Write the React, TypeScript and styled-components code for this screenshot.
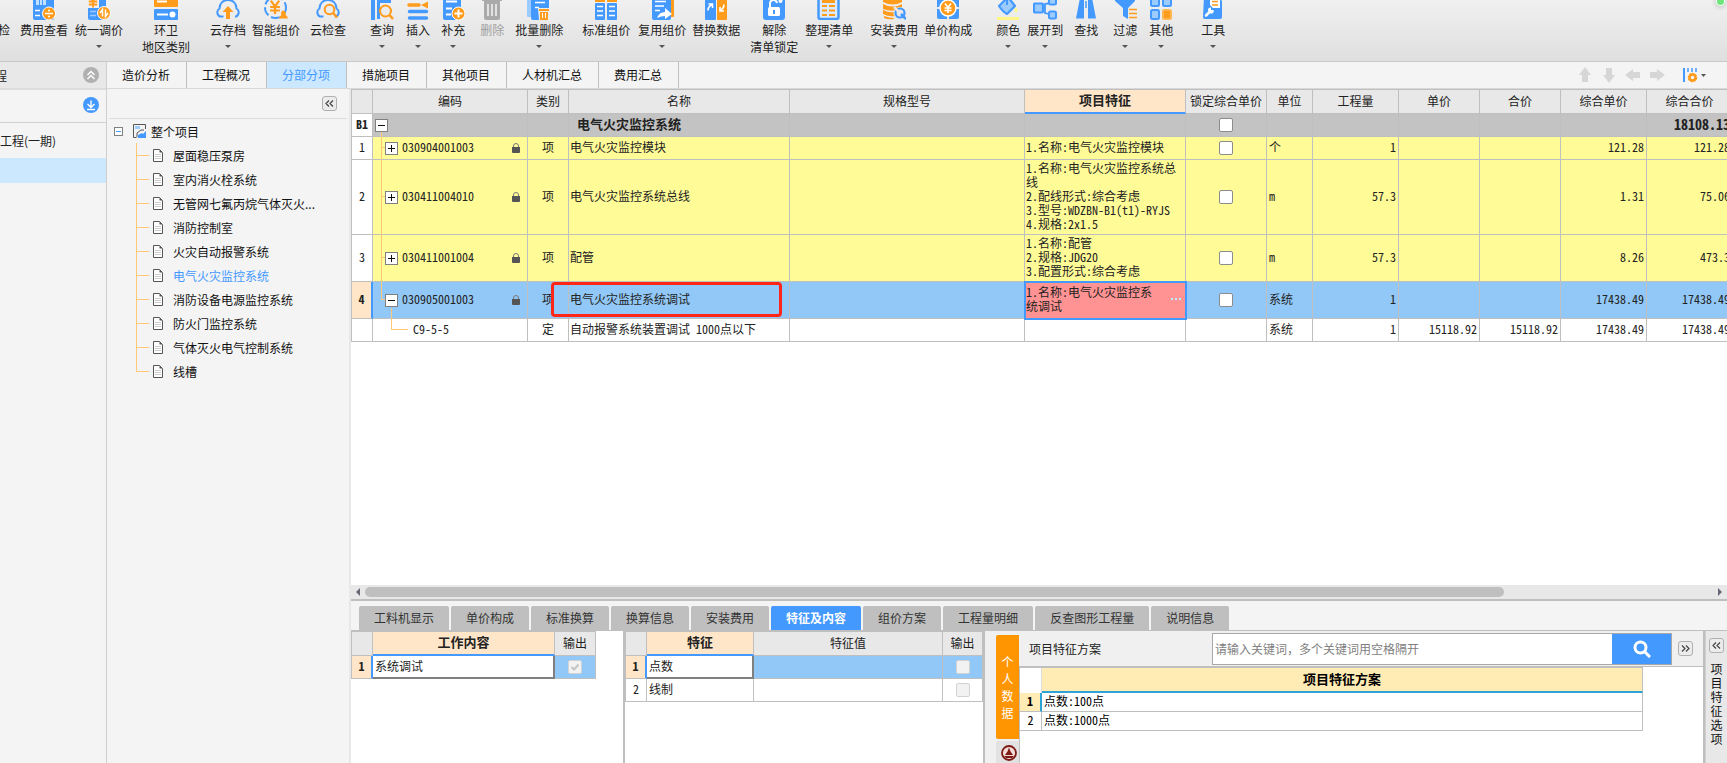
import React from "react";
import styled, { createGlobalStyle, css } from "styled-components";

const BLUE = "#4499ff";
const PALE = "#9ccbff";
const ORANGE = "#ff9c1c";
const LINE = "#bfbfbf";
const UI = `"Noto Sans CJK SC", sans-serif`;
const GRID = `"Noto Sans Mono CJK SC", "Noto Sans CJK SC", monospace`;

const Global = createGlobalStyle`
  *, *::before, *::after { box-sizing: border-box; }
  body { margin: 0; font: 12px/17px ${UI}; color: #222; background: #f4f4f4; }
  button, input { font: inherit; color: inherit; padding: 0; margin: 0; }
  button { background: none; border: 0; }
  svg { display: block; }
`;

const Page = styled.div`
  display: flex;
  flex-direction: column;
  height: 100vh;
  min-height: 640px;
  overflow: hidden;
`;

/* ---------- ribbon ---------- */

const Ribbon = styled.header`
  position: relative;
  display: flex;
  flex: none;
  height: 62px;
  overflow: hidden;
  border-bottom: 1px solid #c8c8c8;
  background: linear-gradient(#f0f0f0, #dfdfdf);
`;

const RibbonButton = styled.button<{ $gap: number }>`
  display: flex;
  flex-direction: column;
  flex: none;
  align-items: center;
  margin-left: ${(p) => p.$gap}px;
  white-space: nowrap;
  color: #222;
  &:disabled { color: #a0a0a0; }
`;

const RibbonIcon = styled.svg`
  width: 24px;
  height: 20px;
  margin-bottom: 1px;
`;

const Caret = styled.span`
  margin-top: 7px;
  border: 3px solid transparent;
  border-top-color: #555;
  border-bottom: 0;
`;

const StatusDot = styled.span`
  position: absolute;
  top: -6px;
  right: 2px;
  width: 9px;
  height: 12px;
  border: 1px solid #fff;
  border-radius: 4px;
  background: #6fe37c;
  box-shadow: 0 1px 5px #bbb;
`;

const Yen = ({ x, y, c, s = 1 }: { x: number; y: number; c: string; s?: number }) => (
  <path
    d="M-3 -4.500L0 -.5 3 -4.500M-3.500 0h7M-3.500 2.500h7M0 -.5v5.500"
    transform={`translate(${x} ${y}) scale(${s})`}
    stroke={c}
    strokeWidth="1.6"
    fill="none"
  />
);

const cloud = (
  <path
    d="M7.5 20.500H4A4.500 4.500 0 0 1 3.500 12.500C3.500 7.500 7 4 12 4s8.500 3.500 8.500 8.500A4.500 4.500 0 0 1 20 20.500h-1"
    fill="none"
    stroke={BLUE}
    strokeWidth="2"
  />
);

const icons: Record<string, React.ReactNode> = {
  none: null,
  feeView: (
    <>
      <rect x="1" y="0" width="21" height="24" rx="2" fill={BLUE} />
      <path d="M4 4h3v5H4zM8 2h2v7H8zM11 3h3v6h-3z" fill="#c4e0ff" />
      <path d="M3 14.500h5M3 19.500h5" stroke="#fff" strokeWidth="1.500" />
      <circle cx="17" cy="17.500" r="6.500" fill={ORANGE} stroke="#fff" />
      <path d="M13 17.500h8" stroke="#fff" strokeWidth="1.500" />
      <circle cx="17" cy="14.500" r="1" fill="#fff" />
      <circle cx="17" cy="20.500" r="1" fill="#fff" />
    </>
  ),
  adjust: (
    <>
      <path d="M1 12h11V0h5a2 2 0 0 1 2 2v22H3a2 2 0 0 1 -2 -2z" fill={BLUE} />
      <Yen x={6} y={5.5} c={ORANGE} s={1.2} />
      <path d="M3 15.500h6M3 19.500h6" stroke={PALE} strokeWidth="1.500" />
      <circle cx="17" cy="17" r="6.500" fill={ORANGE} stroke="#fff" />
      <path d="M15.500 20.500v-7l-2.500 3.500M18.500 13.500v7l2.500 -3.500" fill="none" stroke="#fff" strokeWidth="1.500" />
    </>
  ),
  region: (
    <>
      <rect x="0" y="0" width="24" height="11" rx="1" fill={ORANGE} />
      <path d="M3 5.500h10" stroke="#fff" strokeWidth="2" />
      <rect x="0" y="13" width="24" height="11" rx="1" fill={BLUE} />
      <path d="M3 18.500h11" stroke="#fff" strokeWidth="2" />
      <circle cx="18.500" cy="18.500" r="3" fill="#fff" />
    </>
  ),
  cloudSave: (
    <>
      {cloud}
      <path d="M12 10l5.500 6H14v7h-4v-7H6.500z" fill={ORANGE} />
    </>
  ),
  smart: (
    <>
      <circle cx="11.500" cy="11.500" r="10.500" fill="none" stroke={BLUE} strokeWidth="2" strokeDasharray="9 3" />
      <Yen x={11} y={11} c={ORANGE} s={1.4} />
      <path d="M19 14.500a3 3 0 0 1 2.500 4.500q2 .5 2.500 3.500H15q.5 -3 2.500 -3.500a3 3 0 0 1 1.500 -4.500z" fill={ORANGE} />
    </>
  ),
  cloudCheck: (
    <>
      {cloud}
      <circle cx="13.500" cy="13.500" r="4.800" fill="#ececec" stroke={ORANGE} strokeWidth="2" />
      <path d="M17 17l4 4.500" stroke={ORANGE} strokeWidth="2.500" />
    </>
  ),
  query: (
    <>
      <rect x="1" y="0" width="4" height="24" fill={BLUE} />
      <path d="M7 0h14v7H10v16H7z" fill={BLUE} />
      <circle cx="15.500" cy="15" r="5.500" fill="#ececec" stroke={ORANGE} strokeWidth="2" />
      <path d="M19.500 19l3.500 4" stroke={ORANGE} strokeWidth="2.500" />
    </>
  ),
  insert: (
    <>
      <path d="M3 9h10" stroke={ORANGE} strokeWidth="3.500" strokeLinecap="round" />
      <path d="M22 5.500v7l-7 -3.500z" fill={ORANGE} />
      <path d="M4 2h16M3.500 15.500h17M3.500 22h17" stroke={BLUE} strokeWidth="3.500" strokeLinecap="round" />
    </>
  ),
  supply: (
    <>
      <rect x="2" y="-2" width="18" height="26" rx="2" fill={BLUE} />
      <path d="M5 5.500h11M5 12.500h6M5 18.500h5" stroke="#fff" strokeWidth="2" />
      <circle cx="17.500" cy="17.500" r="6.500" fill={ORANGE} stroke="#fff" />
      <path d="M13.500 17.500h8M17.500 13.500v8" stroke="#fff" strokeWidth="2" />
    </>
  ),
  trash: (
    <>
      <path d="M2 2h20v3H2z" fill="#aaa" />
      <path d="M4 5h16v17a2 2 0 0 1 -2 2H6a2 2 0 0 1 -2 -2z" fill="#aaa" />
      <path d="M8 8v12M12 8v12M16 8v12" stroke="#e8e8e8" strokeWidth="1.800" />
    </>
  ),
  batch: (
    <>
      <rect x="0" y="0" width="14" height="21" rx="1" fill={PALE} />
      <rect x="4" y="0" width="18" height="24" rx="2" fill={BLUE} />
      <path d="M8 6.500h10M8 11.500h4" stroke="#fff" strokeWidth="1.500" />
      <path d="M11 12h12v12H12z" fill="#eee" />
      <path d="M12 13h10v2H12zM13 16h8v8h-8z" fill={ORANGE} />
      <path d="M15.500 17v5M18.500 17v5" stroke="#fff" />
    </>
  ),
  standard: (
    <>
      <rect x="1" y="0" width="10" height="6" fill={ORANGE} />
      <rect x="13" y="0" width="10" height="6" fill={ORANGE} />
      <rect x="1" y="7" width="10" height="17" rx="1" fill={BLUE} />
      <rect x="13" y="7" width="10" height="17" rx="1" fill={BLUE} />
      <path d="M3 10.500h6M3 15h6M3 19.500h6M15 10.500h6M15 15h6M15 19.500h6" stroke="#fff" strokeWidth="1.500" />
    </>
  ),
  reuse: (
    <>
      <rect x="14" y="0" width="10" height="21" rx="1" fill={ORANGE} />
      <rect x="2" y="-1" width="19" height="25" rx="2" fill={BLUE} />
      <path d="M5 5.500h11M5 10h9M5 14.500h5" stroke="#fff" strokeWidth="1.500" />
      <path d="M7 22q2 -6 8 -6v-4l7 6 -7 5v-3q-4 0 -8 2z" fill="#fff" />
    </>
  ),
  swap: (
    <>
      <rect x="1" y="0" width="11" height="24" rx="1" fill={BLUE} />
      <rect x="13" y="0" width="10" height="24" rx="1" fill={ORANGE} />
      <path d="M4 14.500q0 -4 4 -6M4.500 8H8.500v4M20 8.500q0 4 -4 6M20 15h-4v-4" fill="none" stroke="#fff" strokeWidth="1.600" />
    </>
  ),
  unlock: (
    <>
      <rect x="1" y="-2" width="22" height="26" rx="3" fill={BLUE} />
      <rect x="6" y="11" width="12" height="9" rx="1.500" fill="#fff" />
      <path d="M8 11V8a3.500 3.500 0 0 1 7 -1" fill="none" stroke="#fff" strokeWidth="2" />
      <path d="M12 14v4" stroke={BLUE} strokeWidth="2" />
      <circle cx="18.500" cy="5" r="2" fill="#fff" />
    </>
  ),
  arrange: (
    <>
      <rect x="1.500" y="-2" width="20" height="25" rx="2" fill="#dceaff" stroke={BLUE} strokeWidth="2.500" />
      <path d="M5 5.500h13" stroke={ORANGE} strokeWidth="3" />
      <path d="M5 10h5M12 10h6M5 14.500h5M12 14.500h6M5 19h5M12 19h6" stroke={ORANGE} strokeWidth="2" />
    </>
  ),
  install: (
    <>
      <path d="M1 1q10 5 19 0v5q-9 5 -19 0zM1 8q10 5 19 0v4q-9 5 -19 1zM1 14q6 3 12 2v4q-6 1 -12 -2zM2 20q5 2 10 2v1q-6 1 -10 -1z" fill={ORANGE} />
      <circle cx="18" cy="17.500" r="6.500" fill="#e8e8e8" />
      <circle cx="18" cy="17" r="4.500" fill="none" stroke={BLUE} strokeWidth="2.200" />
      <path d="M18 17l-6 -6" stroke="#e8e8e8" strokeWidth="2.500" />
      <path d="M19 18l5 5" stroke={BLUE} strokeWidth="2.500" />
    </>
  ),
  compose: (
    <>
      <rect x="1" y="1" width="22" height="22" rx="2" fill={BLUE} />
      <path d="M12 0v24M0 12h24" stroke="#e8e8e8" strokeWidth="2" />
      <circle cx="12" cy="12" r="8" fill={ORANGE} stroke="#fff" strokeWidth="1.500" />
      <Yen x={12} y={12} c="#fff" />
    </>
  ),
  color: (
    <>
      <path d="M3 10l9 -9 7 9 -8 8q-4 -2 -8 -8z" fill={PALE} stroke={BLUE} strokeWidth="2.200" strokeLinejoin="round" />
      <path d="M11 0v9" stroke={BLUE} strokeWidth="2" />
      <path d="M20 11q3 4 0 5.500q-3 -1.500 0 -5.500z" fill="#fff68a" />
      <path d="M1 22.500h22" stroke="#fff68a" strokeWidth="3" />
    </>
  ),
  expand: (
    <>
      <path d="M8 12h4M20 6.500L12 8v9l8 2" fill="none" stroke={BLUE} strokeWidth="1.800" />
      <rect x="1" y="7.500" width="9" height="9" rx="1" fill={PALE} stroke={BLUE} strokeWidth="2.200" />
      <rect x="16" y="1.500" width="7" height="7" rx="1.500" fill={PALE} stroke={BLUE} strokeWidth="2" />
      <rect x="16" y="15.500" width="7" height="7" rx="1.500" fill={PALE} stroke={BLUE} strokeWidth="2" />
    </>
  ),
  find: (
    <>
      <path d="M6 2h4v20.500H2L5 7zM18 2h-4v20.500h8L19 7z" fill={BLUE} />
      <path d="M12 5v7" stroke={BLUE} strokeWidth="1.500" />
    </>
  ),
  filter: (
    <>
      <path d="M2 0h20v5l-7 7v11l-5 -3v-8L2 5z" fill={BLUE} />
      <path d="M16 13.500h8M16 17.500h8M16 21.500h8" stroke={ORANGE} strokeWidth="1.600" />
    </>
  ),
  other: (
    <>
      <rect x="2" y="1" width="8" height="9" rx="1.500" fill={PALE} stroke={BLUE} strokeWidth="2" />
      <rect x="14" y="1" width="8" height="9" rx="1.500" fill={PALE} stroke={BLUE} strokeWidth="2" />
      <rect x="2" y="14" width="8" height="9" rx="1.500" fill={PALE} stroke={BLUE} strokeWidth="2" />
      <rect x="14" y="14" width="8" height="9" rx="1.500" fill={ORANGE} stroke="#ffb650" strokeWidth="2" />
    </>
  ),
  tool: (
    <>
      <path d="M3 0h14l4 5v16a2 2 0 0 1 -2 2H4a2 2 0 0 1 -2 -2z" fill={BLUE} />
      <path d="M9 0h10v12H12L9 9z" fill="#fff" />
      <path d="M11 5.500h6M11 9h6" stroke={ORANGE} strokeWidth="1.500" />
      <path d="M5 19.500l4 -4" stroke="#fff" strokeWidth="2.500" strokeLinecap="round" />
      <path d="M7 14.500a2.500 2.500 0 0 1 3 -3v2.500h2.500a2.500 2.500 0 0 1 -3 3.500z" fill="#fff" />
    </>
  ),
};

type Tool = { label: string; second?: string; icon: string; gap: number; caret?: boolean; off?: boolean };

const tools: Tool[] = [
  { label: "检", icon: "none", gap: -8 },
  { label: "费用查看", icon: "feeView", gap: 4 },
  { label: "统一调价", icon: "adjust", gap: 7, caret: true },
  { label: "环卫", second: "地区类别", icon: "region", gap: 19 },
  { label: "云存档", icon: "cloudSave", gap: 20, caret: true },
  { label: "智能组价", icon: "smart", gap: 6 },
  { label: "云检查", icon: "cloudCheck", gap: 10 },
  { label: "查询", icon: "query", gap: 24, caret: true },
  { label: "插入", icon: "insert", gap: 12, caret: true },
  { label: "补充", icon: "supply", gap: 11, caret: true },
  { label: "删除", icon: "trash", gap: 15, off: true },
  { label: "批量删除", icon: "batch", gap: 11, caret: true },
  { label: "标准组价", icon: "standard", gap: 19 },
  { label: "复用组价", icon: "reuse", gap: 8, caret: true },
  { label: "替换数据", icon: "swap", gap: 6 },
  { label: "解除", second: "清单锁定", icon: "unlock", gap: 10 },
  { label: "整理清单", icon: "arrange", gap: 7, caret: true },
  { label: "安装费用", icon: "install", gap: 17, caret: true },
  { label: "单价构成", icon: "compose", gap: 6 },
  { label: "颜色", icon: "color", gap: 24, caret: true },
  { label: "展开到", icon: "expand", gap: 7, caret: true },
  { label: "查找", icon: "find", gap: 11 },
  { label: "过滤", icon: "filter", gap: 15, caret: true },
  { label: "其他", icon: "other", gap: 12, caret: true },
  { label: "工具", icon: "tool", gap: 28, caret: true },
];

/* ---------- frame ---------- */

const Body = styled.div`
  display: flex;
  flex: 1;
  min-height: 0;
`;

const Projects = styled.aside`
  flex: none;
  width: 107px;
  overflow: hidden;
  border-right: 1px solid #d0d0d0;
  white-space: nowrap;
`;

const ProjectBar = styled.div<{ $head?: boolean }>`
  display: flex;
  align-items: center;
  justify-content: space-between;
  padding-right: 7px;
  ${(p) =>
    p.$head
      ? css`height: 28px; background: #e8e8e8; border-bottom: 2px solid #dcdcdc; & > span { margin-left: -5px; }`
      : css`height: 33px; padding-bottom: 2px; justify-content: flex-end; border-bottom: 1px solid #d0d0d0;`}
`;

const ProjectItem = styled.div<{ $on?: boolean }>`
  height: ${(p) => (p.$on ? 25 : 35)}px;
  line-height: 35px;
  background: ${(p) => (p.$on ? "#cce8ff" : "none")};
`;

const RoundButton = styled.button<{ $c: string }>`
  width: 16px;
  height: 16px;
  border-radius: 50%;
  background: ${(p) => p.$c};
`;

const Work = styled.div`
  display: flex;
  flex-direction: column;
  flex: 1;
  min-width: 0;
`;

const TabBar = styled.nav`
  display: flex;
  flex: none;
  height: 27px;
  border-bottom: 1px solid #d8d8d8;
`;

const Tab = styled.button<{ $on?: boolean }>`
  padding: 0 16px 1px 15px;
  border-right: 1px solid ${LINE};
  color: ${(p) => (p.$on ? BLUE : "#111")};
  background: ${(p) => (p.$on ? "#cce8ff" : "none")};
`;

const Movers = styled.div`
  display: flex;
  align-items: center;
  gap: 8px;
  margin-left: auto;
  padding-right: 18px;
`;

const Split = styled.div`
  display: flex;
  flex: 1;
  min-height: 0;
`;

/* ---------- project tree ---------- */

const TreePanel = styled.aside`
  flex: none;
  width: 244px;
  border-right: 2px solid #e8e8e8;
`;

const TreeHead = styled.div`
  display: flex;
  align-items: center;
  justify-content: flex-end;
  height: 30px;
  margin: 0 2px;
  padding-right: 10px;
  border-bottom: 1px solid #dcdcdc;
`;

const SmallButton = styled.button`
  display: flex;
  flex: none;
  align-items: center;
  justify-content: center;
  width: 15px;
  height: 15px;
  border: 1px solid #b0b0b0;
  border-radius: 3px;
  background: #ececec;
`;

const TreeRoot = styled.div`
  display: flex;
  align-items: center;
  height: 24px;
  padding-left: 7px;
  color: #111;
  & > svg { margin: 0 4px 0 10px; }
`;

const Toggle = styled.button<{ $size: number }>`
  display: flex;
  flex: none;
  align-items: center;
  justify-content: center;
  width: ${(p) => p.$size}px;
  height: ${(p) => p.$size}px;
  border: 1px solid #808080;
  background: #fff;
`;

const TreeList = styled.ul`
  margin: 0;
  padding: 0;
  list-style: none;
`;

const TreeItem = styled.li<{ $on?: boolean }>`
  position: relative;
  display: flex;
  align-items: center;
  gap: 10px;
  height: 24px;
  padding-left: 46px;
  color: ${(p) => (p.$on ? BLUE : "#111")};
  &::before {
    content: "";
    position: absolute;
    left: 29px;
    top: 0;
    width: 1px;
    height: 24px;
    background: #ffc876;
  }
  &:last-child::before { height: 12px; }
  &::after {
    content: "";
    position: absolute;
    left: 29px;
    top: 12px;
    width: 13px;
    height: 1px;
    background: #ffc876;
  }
`;

const DocIcon = () => (
  <svg width="10" height="13" viewBox="0 0 10 13">
    <path d="M.5 .5h6l3 3v9h-9z" fill="#fff" stroke="#555" />
    <path d="M6.500 .5v3h3z" fill="#555" />
    <path d="M2 5.500h6M2 7.500h6M2 9.500h6" stroke="#ccc" />
  </svg>
);

const treeItems = [
  "屋面稳压泵房",
  "室内消火栓系统",
  "无管网七氟丙烷气体灭火...",
  "消防控制室",
  "火灾自动报警系统",
  "电气火灾监控系统",
  "消防设备电源监控系统",
  "防火门监控系统",
  "气体灭火电气控制系统",
  "线槽",
];

/* ---------- main grid ---------- */

const Main = styled.main`
  display: flex;
  flex-direction: column;
  flex: 1;
  min-width: 0;
  background: #fff;
`;

const GridScroll = styled.div`
  flex: 1;
  min-height: 0;
  overflow: hidden;
`;

const Table = styled.table`
  table-layout: fixed;
  border-collapse: separate;
  border-spacing: 0;
  border-top: 1px solid ${LINE};
  border-left: 1px solid ${LINE};
  font: 12px/14px ${GRID};
  td, th { padding: 0 2px 2px; border-right: 1px solid ${LINE}; border-bottom: 1px solid ${LINE}; }
`;

const MainTable = styled(Table)`width: 1382px;`;
const FullTable = styled(Table)`width: 100%;`;

const Th = styled.th<{ $on?: boolean }>`
  height: ${(p) => (p.$on ? 23 : 24)}px;
  overflow: hidden;
  white-space: nowrap;
  font-weight: ${(p) => (p.$on ? 700 : 400)};
  font-size: ${(p) => (p.$on ? 13 : 12)}px;
  background: ${(p) => (p.$on ? "#ffe6c8" : "#e8e8e8")};
  && { border-bottom: ${(p) => (p.$on ? `2px solid ${BLUE}` : `1px solid ${LINE}`)}; }
`;

const tones = { group: "#c3c3c3", yellow: "#fffb97", blue: "#92c8f7", white: "#fff" };

const Row = styled.tr<{ $tone: keyof typeof tones; $h: number }>`
  height: ${(p) => p.$h}px;
  background: ${(p) => tones[p.$tone]};
`;

const NumCell = styled.td<{ $on?: boolean; $bold?: boolean }>`
  text-align: center;
  background: #fff;
  font-weight: ${(p) => (p.$bold || p.$on ? 700 : 400)};
  ${(p) =>
    p.$on &&
    css`background: #ffe6c8; && { border-right: 2px solid ${BLUE}; }`}
`;

const CodeCell = styled.td<{ $first?: boolean; $last?: boolean; $child?: boolean }>`
  position: relative;
  && { padding: 0 7px 0 ${(p) => (p.$first ? 2 : p.$child ? 40 : 12)}px; }
  &::before {
    content: "";
    position: absolute;
    left: ${(p) => (p.$child ? 18 : 8)}px;
    width: ${(p) => (p.$child ? 17 : 5)}px;
    top: 0;
    bottom: 50%;
    border-left: 1px solid #ffc876;
    border-bottom: 1px solid #ffc876;
    ${(p) => p.$first && css`display: none;`}
  }
  &::after {
    content: "";
    position: absolute;
    left: 8px;
    top: ${(p) => (p.$first ? "18px" : "0")};
    bottom: -1px;
    border-left: 1px solid #ffc876;
    ${(p) => (p.$last || p.$child) && css`left: 18px; top: 26px;`}
    ${(p) => p.$child && css`display: none;`}
  }
`;

const CodeLine = styled.div`
  position: relative;
  z-index: 1;
  display: flex;
  align-items: center;
  gap: 4px;
  & > svg { margin-left: auto; }
  & > span { padding-bottom: 2px; }
`;

const Td = styled.td<{ $align?: string; $bold?: boolean }>`
  text-align: ${(p) => p.$align || "left"};
  font-weight: ${(p) => (p.$bold ? 700 : 400)};
  font-size: ${(p) => (p.$bold ? 14 : 12)}px;
  white-space: nowrap;
`;

const CheckTd = styled.td`
  && { padding-bottom: 0; }
`;

const NameCell = styled.td<{ $bold?: boolean }>`
  position: relative;
  && { padding-left: ${(p) => (p.$bold ? 8 : 1)}px; }
  font-weight: ${(p) => (p.$bold ? 700 : 400)};
  font-size: ${(p) => (p.$bold ? 13 : 12)}px;
`;

const Highlight = styled.span`
  position: absolute;
  z-index: 2;
  inset: 0 7px 1px -18px;
  border: 3px solid #ff2618;
  border-radius: 4px;
`;

const FeatureCell = styled.td<{ $on?: boolean }>`
  && { padding: 1px 2px 3px 1px; }
  white-space: pre-line;
  ${(p) => p.$on && css`background: #ff9292; && { outline: 2px solid ${BLUE}; outline-offset: -1px; }`}
`;

const FeatureEdit = styled.div`
  display: flex;
  align-items: center;
  justify-content: space-between;
  padding-right: 2px;
  button { display: flex; gap: 2px; }
  i { width: 2px; height: 2px; background: #b8ecff; }
`;

const Check = styled.input.attrs({ type: "checkbox" })`
  appearance: none;
  display: block;
  width: 14px;
  height: 14px;
  margin: 0 auto;
  border: 1px solid #8c8c8c;
  border-radius: 2px;
  background: #fff;
  &:disabled { border-color: #d2d2d2; background: #f2f2f2; }
  &:checked {
    background: #f2f2f2 url("data:image/svg+xml,%3Csvg xmlns='http://www.w3.org/2000/svg' viewBox='0 0 12 12'%3E%3Cpath d='M2.500 6l2.500 2.500 4.500-5' fill='none' stroke='%23c4c4c4' stroke-width='2'/%3E%3C/svg%3E");
  }
`;

const Lock = () => (
  <svg width="8" height="10" viewBox="0 0 8 10">
    <path d="M1.500 5V3a2.500 2.500 0 0 1 5 0v2" fill="none" stroke="#777" />
    <path d="M0 4h8V9q0 1 -1 1H1q-1 0 -1 -1z" fill="#555" />
  </svg>
);

const ToggleMark = ({ plus, color = "#111" }: { plus?: boolean; color?: string }) => (
  <svg width="7" height="7" viewBox="0 0 7 7">
    <path d={plus ? "M0 3.500h7M3.500 0v7" : "M0 3.500h7"} stroke={color} />
  </svg>
);

const Chevrons = ({ right }: { right?: boolean }) => (
  <svg width="9" height="7" viewBox="0 0 9 7">
    <path
      d={right ? "M1 .5l3 3 -3 3M5 .5l3 3 -3 3" : "M4 .5l-3 3 3 3M8 .5l-3 3 3 3"}
      fill="none"
      stroke="#444"
      strokeWidth="1.200"
    />
  </svg>
);

type Line = {
  no: string; code: string; kind: string; name: string; feature: string; unit: string;
  qty: string; price: string; sum: string; unitAll: string; total: string;
  tone: keyof typeof tones; h: number;
};

const lines: Line[] = [
  { no: "B1", code: "", kind: "", name: "电气火灾监控系统", feature: "", unit: "", qty: "", price: "", sum: "", unitAll: "", total: "18108.13", tone: "group", h: 23 },
  { no: "1", code: "030904001003", kind: "项", name: "电气火灾监控模块", feature: "1.名称:电气火灾监控模块", unit: "个", qty: "1", price: "", sum: "", unitAll: "121.28", total: "121.28", tone: "yellow", h: 23 },
  { no: "2", code: "030411004010", kind: "项", name: "电气火灾监控系统总线", feature: "1.名称:电气火灾监控系统总\n线\n2.配线形式:综合考虑\n3.型号:WDZBN-B1(t1)-RYJS\n4.规格:2x1.5", unit: "m", qty: "57.3", price: "", sum: "", unitAll: "1.31", total: "75.06", tone: "yellow", h: 75 },
  { no: "3", code: "030411001004", kind: "项", name: "配管", feature: "1.名称:配管\n2.规格:JDG20\n3.配置形式:综合考虑", unit: "m", qty: "57.3", price: "", sum: "", unitAll: "8.26", total: "473.3", tone: "yellow", h: 47 },
  { no: "4", code: "030905001003", kind: "项", name: "电气火灾监控系统调试", feature: "1.名称:电气火灾监控系\n统调试", unit: "系统", qty: "1", price: "", sum: "", unitAll: "17438.49", total: "17438.49", tone: "blue", h: 37 },
  { no: "", code: "C9-5-5", kind: "定", name: "自动报警系统装置调试 1000点以下", feature: "", unit: "系统", qty: "1", price: "15118.92", sum: "15118.92", unitAll: "17438.49", total: "17438.49", tone: "white", h: 23 },
];

const columns: [string, number][] = [
  ["", 21], ["编码", 155], ["类别", 41], ["名称", 221], ["规格型号", 235], ["项目特征", 161],
  ["锁定综合单价", 81], ["单位", 46], ["工程量", 86], ["单价", 81], ["合价", 81], ["综合单价", 86], ["综合合价", 86],
];

const ScrollBar = styled.div`
  display: flex;
  flex: none;
  align-items: center;
  height: 16px;
  padding: 0 5px;
  border-bottom: 2px solid ${LINE};
  background: #e8e8e8;
`;

const ScrollTrack = styled.div`
  flex: 1;
  margin: 0 5px;
`;

const ScrollThumb = styled.div`
  height: 10px;
  border-radius: 5px;
  background: ${LINE};
`;

const ScrollArrow = styled.button<{ $right?: boolean }>`
  border: 4px solid transparent;
  ${(p) =>
    p.$right
      ? css`border-left-color: #667; border-right: 0;`
      : css`border-right-color: #667; border-left: 0;`}
`;

/* ---------- detail area ---------- */

const DetailTabs = styled.nav`
  display: flex;
  flex: none;
  gap: 2px;
  height: 30px;
  padding: 5px 0 0 8px;
  border-bottom: 1px solid ${LINE};
  background: #f4f4f4;
`;

const DetailTab = styled.button<{ $on?: boolean }>`
  padding: 0 15px 1px;
  border-radius: 2px 2px 0 0;
  color: ${(p) => (p.$on ? "#fff" : "#333")};
  font-weight: ${(p) => (p.$on ? 700 : 400)};
  background: ${(p) => (p.$on ? BLUE : LINE)};
`;

const Detail = styled.section`
  display: flex;
  flex: none;
  height: 132px;
`;

const Pane = styled.div<{ $w: number; $pad?: number }>`
  flex: none;
  width: ${(p) => p.$w}px;
  padding-right: ${(p) => p.$pad || 0}px;
`;

const Divider = styled.div`
  flex: none;
  width: 2px;
  background: ${LINE};
`;

const ActiveCell = styled.td`
  background: #fff;
  && { border-right: 2px solid #808080; border-bottom: 2px solid #808080; }
`;

const Library = styled.div`
  display: flex;
  flex: 1;
  min-width: 0;
  background: #f0f0f0;
`;

const LibTabs = styled.div`
  flex: none;
  width: 34px;
  padding: 4px 0 0 11px;
`;

const LibTab = styled.button<{ $on?: boolean }>`
  display: flex;
  align-items: ${(p) => (p.$on ? "center" : "flex-start")};
  justify-content: center;
  width: 23px;
  height: ${(p) => (p.$on ? 104 : 30)}px;
  margin-bottom: 2px;
  padding: ${(p) => (p.$on ? "0 5px" : "4px 0 0 3px")};
  color: #fff;
  border-radius: 2px 0 0 2px;
  background: ${(p) => (p.$on ? "#ff9500" : "#e2e2e2")};
`;

const LibBody = styled.div`
  display: flex;
  flex-direction: column;
  flex: 1;
  min-width: 0;
`;

const LibHead = styled.div`
  display: flex;
  flex: none;
  align-items: center;
  height: 36px;
  padding: 0 10px;
  border-bottom: 1px solid ${LINE};
  & > label { flex: 0 0 183px; }
`;

const Search = styled.div`
  display: flex;
  flex: 1;
  height: 32px;
  margin-right: 6px;
  border: 1px solid #a8a8a8;
  background: #fff;
  input { flex: 1; min-width: 0; padding: 0 2px; border: 0; background: none; }
  input::placeholder { color: #808080; opacity: 1; }
  button { display: flex; align-items: center; justify-content: center; width: 59px; background: ${BLUE}; }
`;

const LibTableWrap = styled.div`
  flex: 1;
  padding-right: 60px;
  border-left: 1px solid ${LINE};
  background: #fff;
`;

const LibTable = styled(FullTable)`
  border-left: 0;
  color: #000;
  th { height: 25px; padding: 0 0 2px; font-size: 13px; background: #ffecb4; border-bottom: 2px solid #2fa3d6; }
  th:first-child { background: #fff; border-bottom: 0; border-right-color: #ddd; }
  td { height: 19px; }
`;

const LibNum = styled.td<{ $on?: boolean }>`
  text-align: center;
  font-weight: ${(p) => (p.$on ? 700 : 400)};
  ${(p) => p.$on && css`background: #ffecb4; && { border-right: 2px solid #2fa3d6; }`}
`;

const SideStrip = styled.aside`
  display: flex;
  flex-direction: column;
  flex: none;
  align-items: center;
  gap: 9px;
  width: 22px;
  padding-top: 7px;
  border-left: 1px solid #cfcfcf;
  background: #e8e8e8;
`;

const SideLabel = styled.span`
  width: 12px;
  color: #111;
  line-height: 14px;
`;

const detailTabs = ["工料机显示", "单价构成", "标准换算", "换算信息", "安装费用", "特征及内容", "组价方案", "工程量明细", "反查图形工程量", "说明信息"];
const mainTabs = ["造价分析", "工程概况", "分部分项", "措施项目", "其他项目", "人材机汇总", "费用汇总"];
const arrows: [string, number][] = [["上移", 0], ["下移", 180], ["左移", 270], ["右移", 90]];

const ColGroup = ({ widths }: { widths: (number | undefined)[] }) => (
  <colgroup>{widths.map((w, i) => <col key={i} width={w} />)}</colgroup>
);

export default function App() {
  return (
    <Page>
      <Global />
      <Ribbon>
        {tools.map((t, i) => (
          <RibbonButton key={i} $gap={t.gap} disabled={t.off}>
            <RibbonIcon viewBox="0 4 24 20">{icons[t.icon]}</RibbonIcon>
            <span>{t.label}</span>
            {t.second && <span>{t.second}</span>}
            {t.caret && <Caret />}
          </RibbonButton>
        ))}
        <StatusDot />
      </Ribbon>

      <Body>
        <Projects>
          <ProjectBar $head>
            <span>程</span>
            <RoundButton $c="#b0b0b0" aria-label="收起">
              <svg width="16" height="16" viewBox="0 0 16 16">
                <path d="M4.500 8L8 4.500 11.500 8M4.500 12L8 8.500l3.500 3.500" fill="none" stroke="#fff" strokeWidth="1.400" />
              </svg>
            </RoundButton>
          </ProjectBar>
          <ProjectBar>
            <RoundButton $c={BLUE} aria-label="下载">
              <svg width="16" height="16" viewBox="0 0 16 16">
                <path d="M8 3.500V10M4.500 7L8 10.500 11.500 7M4 12.500h8" fill="none" stroke="#fff" strokeWidth="1.400" />
              </svg>
            </RoundButton>
          </ProjectBar>
          <ProjectItem>工程(一期)</ProjectItem>
          <ProjectItem $on />
        </Projects>

        <Work>
          <TabBar>
            {mainTabs.map((t) => <Tab key={t} $on={t === "分部分项"}>{t}</Tab>)}
            <Movers>
              {arrows.map(([name, turn]) => (
                <button key={name} aria-label={name}>
                  <svg width="16" height="16" viewBox="0 0 16 16">
                    <path d="M8 0l6 8h-3v7H5V8H2z" fill="#d6d6d6" transform={`rotate(${turn} 8 8)`} />
                  </svg>
                </button>
              ))}
              <button aria-label="列设置">
                <svg width="36" height="16" viewBox="0 0 36 16">
                  <path d="M11 1v14" stroke={BLUE} strokeWidth="2" />
                  <path d="M15 1v4M19 1v4M23 1v4" stroke={BLUE} strokeWidth="1.500" />
                  <circle cx="19.500" cy="10.500" r="3" fill="none" stroke={ORANGE} strokeWidth="2.500" />
                  <circle cx="19.500" cy="10.500" r="4" fill="none" stroke={ORANGE} strokeWidth="1.500" strokeDasharray="2 1" />
                  <path d="M28 7h5l-2.500 3z" fill="#555" />
                </svg>
              </button>
            </Movers>
          </TabBar>

          <Split>
            <TreePanel>
              <TreeHead>
                <SmallButton aria-label="折叠"><Chevrons /></SmallButton>
              </TreeHead>
              <TreeRoot>
                <Toggle $size={9} aria-label="展开">
                  <svg width="5" height="5" viewBox="0 0 5 5"><path d="M0 2.500h5" stroke={BLUE} /></svg>
                </Toggle>
                <svg width="14" height="14" viewBox="0 0 14 14">
                  <path d="M12.500 5V.5H.5v13h3" fill="none" stroke="#555" />
                  <path d="M2 2h5v3H2z" fill={PALE} />
                  <path d="M4 13V9l4 -3h3" fill="none" stroke="#555" />
                  <path d="M5 14v-3l4 -2 1 1 3 -3v7z" fill={BLUE} />
                </svg>
                整个项目
              </TreeRoot>
              <TreeList>
                {treeItems.map((t) => (
                  <TreeItem key={t} $on={t === "电气火灾监控系统"}><DocIcon />{t}</TreeItem>
                ))}
              </TreeList>
            </TreePanel>

            <Main>
              <GridScroll>
                <MainTable>
                  <ColGroup widths={columns.map((c) => c[1])} />
                  <thead>
                    <tr>{columns.map(([t], i) => <Th key={i} $on={t === "项目特征"}>{t}</Th>)}</tr>
                  </thead>
                  <tbody>
                    {lines.map((r, i) => {
                      const group = r.tone === "group";
                      const on = r.tone === "blue";
                      const child = r.tone === "white";
                      return (
                        <Row key={i} $tone={r.tone} $h={r.h}>
                          <NumCell $on={on} $bold={group}>{r.no}</NumCell>
                          <CodeCell $first={group} $last={on} $child={child}>
                            <CodeLine>
                              {!child && (
                                <Toggle $size={13} aria-label="展开">
                                  <ToggleMark plus={r.tone === "yellow"} />
                                </Toggle>
                              )}
                              <span>{r.code}</span>
                              {!child && !group && <Lock />}
                            </CodeLine>
                          </CodeCell>
                          <Td $align="center">{r.kind}</Td>
                          <NameCell $bold={group}>{r.name}{on && <Highlight />}</NameCell>
                          <Td />
                          <FeatureCell $on={on}>
                            {on ? (
                              <FeatureEdit>
                                <span>{r.feature}</span>
                                <button aria-label="编辑"><i /><i /><i /></button>
                              </FeatureEdit>
                            ) : r.feature}
                          </FeatureCell>
                          <CheckTd>{!child && <Check aria-label="锁定综合单价" />}</CheckTd>
                          <Td>{r.unit}</Td>
                          <Td $align="right">{r.qty}</Td>
                          <Td $align="right">{r.price}</Td>
                          <Td $align="right">{r.sum}</Td>
                          <Td $align="right">{r.unitAll}</Td>
                          <Td $align="right" $bold={group}>{r.total}</Td>
                        </Row>
                      );
                    })}
                  </tbody>
                </MainTable>
              </GridScroll>

              <ScrollBar>
                <ScrollArrow aria-label="向左" />
                <ScrollTrack><ScrollThumb style={{ width: "84.500%" }} /></ScrollTrack>
                <ScrollArrow $right aria-label="向右" />
              </ScrollBar>

              <DetailTabs>
                {detailTabs.map((t) => <DetailTab key={t} $on={t === "特征及内容"}>{t}</DetailTab>)}
              </DetailTabs>

              <Detail>
                <Pane $w={272} $pad={27}>
                  <FullTable>
                    <ColGroup widths={[21, undefined, 41]} />
                    <thead><tr><Th /><Th $on>工作内容</Th><Th>输出</Th></tr></thead>
                    <tbody>
                      <Row $tone="blue" $h={23}>
                        <NumCell $on>1</NumCell>
                        <ActiveCell>系统调试</ActiveCell>
                        <CheckTd><Check aria-label="输出" checked disabled readOnly /></CheckTd>
                      </Row>
                    </tbody>
                  </FullTable>
                </Pane>
                <Divider />
                <Pane $w={358}>
                  <FullTable>
                    <ColGroup widths={[21, 107, undefined, 40]} />
                    <thead><tr><Th /><Th $on>特征</Th><Th>特征值</Th><Th>输出</Th></tr></thead>
                    <tbody>
                      <Row $tone="blue" $h={23}>
                        <NumCell $on>1</NumCell>
                        <ActiveCell>点数</ActiveCell>
                        <Td />
                        <CheckTd><Check aria-label="输出" disabled /></CheckTd>
                      </Row>
                      <Row $tone="white" $h={23}>
                        <NumCell>2</NumCell>
                        <Td>线制</Td>
                        <Td />
                        <CheckTd><Check aria-label="输出" disabled /></CheckTd>
                      </Row>
                    </tbody>
                  </FullTable>
                </Pane>
                <Divider />
                <Library>
                  <LibTabs>
                    <LibTab $on>个人数据</LibTab>
                    <LibTab aria-label="企业数据">
                      <svg width="16" height="16" viewBox="0 0 16 16">
                        <circle cx="8" cy="8" r="7" fill="#f3dcd8" stroke="#7d1a16" strokeWidth="1.800" />
                        <path d="M8 2.500l1.500 4 2.500 3.500H4l2.500 -3.500zM3 11h10l-2 2H5z" fill="#7d1a16" />
                      </svg>
                    </LibTab>
                  </LibTabs>
                  <LibBody>
                    <LibHead>
                      <label htmlFor="plan-search">项目特征方案</label>
                      <Search>
                        <input id="plan-search" placeholder="请输入关键词，多个关键词用空格隔开" />
                        <button aria-label="搜索">
                          <svg width="18" height="18" viewBox="0 0 18 18">
                            <circle cx="7.500" cy="7.500" r="5.500" fill="none" stroke="#fff" strokeWidth="3" />
                            <path d="M12 12l5 5" stroke="#fff" strokeWidth="3" />
                          </svg>
                        </button>
                      </Search>
                      <SmallButton aria-label="更多"><Chevrons right /></SmallButton>
                    </LibHead>
                    <LibTableWrap>
                      <LibTable>
                        <ColGroup widths={[22, undefined]} />
                        <thead><tr><th /><th>项目特征方案</th></tr></thead>
                        <tbody>
                          <tr><LibNum $on>1</LibNum><td>点数:100点</td></tr>
                          <tr><LibNum>2</LibNum><td>点数:1000点</td></tr>
                        </tbody>
                      </LibTable>
                    </LibTableWrap>
                  </LibBody>
                  <Divider />
                  <SideStrip>
                    <SmallButton aria-label="展开选项"><Chevrons /></SmallButton>
                    <SideLabel>项目特征选项</SideLabel>
                  </SideStrip>
                </Library>
              </Detail>
            </Main>
          </Split>
        </Work>
      </Body>
    </Page>
  );
}
